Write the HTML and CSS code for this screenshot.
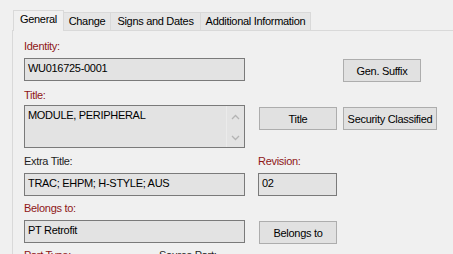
FILE: index.html
```html
<!DOCTYPE html>
<html lang="en">
<head>
  <meta charset="UTF-8" />
  <title>Item Properties</title>
  <link rel="stylesheet" href="styles.css">
</head>
<body>

  <div class="tabs">
    <div class="tab active" style="width:51px">General</div>
    <div class="tab" style="width:47px">Change</div>
    <div class="tab" style="width:90px">Signs and Dates</div>
    <div class="tab" style="width:110px">Additional Information</div>
  </div>

  <div class="panel">
    <div class="form">
      <!-- identity -->
      <div class="lbl req c1 r1">Identity:</div>
      <div class="box c1 r2">WU016725-0001</div>
      <button class="btn c3 r2 btn-top">Gen. Suffix</button>

      <!-- title -->
      <div class="lbl req c1 r3">Title:</div>
      <div class="box multi c1 r4">
        <span class="multi-text">MODULE, PERIPHERAL</span>
        <span class="scroll">
          <svg width="9" height="6" viewBox="0 0 9 6"><path d="M1 5 L4.5 1.5 L8 5" fill="none" stroke="#b4b4b4" stroke-width="1.3"/></svg>
          <svg width="9" height="6" viewBox="0 0 9 6"><path d="M1 1 L4.5 4.5 L8 1" fill="none" stroke="#b4b4b4" stroke-width="1.3"/></svg>
        </span>
      </div>
      <button class="btn c2 r4 btn-title">Title</button>
      <button class="btn c3 r4 btn-title">Security Classified</button>

      <!-- extra title / revision -->
      <div class="lbl c1 r5">Extra Title:</div>
      <div class="lbl req c2 r5">Revision:</div>
      <div class="box c1 r6">TRAC; EHPM; H-STYLE; AUS</div>
      <div class="box c2 r6">02</div>

      <!-- belongs to -->
      <div class="lbl req c1 r7">Belongs to:</div>
      <div class="box c1 r8">PT Retrofit</div>
      <button class="btn c2 r8 btn-top">Belongs to</button>

      <div class="lbl req c1 r9">Part Type:<span class="lbl-2">Source Part:</span></div>
    </div>
  </div>

</body>
</html>
```

FILE: styles.css
```css
body {
  margin: 0;
  background: #f0f0f0;
  font-family: "Liberation Sans", Arial, sans-serif;
  font-size: 11px;
  letter-spacing: -0.3px;
  color: #000;
  width: 453px;
  height: 254px;
  overflow: hidden;
}
.tabs {
  display: flex;
  align-items: flex-end;
  height: 30px;
  padding-left: 13px;
  position: relative;
  z-index: 1;
}
.tab {
  box-sizing: border-box;
  height: 18px;
  background: #e6e6e6;
  border: 1px solid #d9d9d9;
  border-bottom: none;
  border-left: none;
  text-align: center;
  line-height: 17px;
  white-space: nowrap;
}
.tab.active {
  height: 21px;
  margin-bottom: -1px;
  background: #f0f0f0;
  border-left: 1px solid #d9d9d9;
  line-height: 16px;
}
.panel {
  box-sizing: border-box;
  margin-left: 12px;
  border-top: 1px solid #d9d9d9;
  border-left: 1px solid #d9d9d9;
  height: 224px;
  overflow: hidden;
  padding: 9px 0 0 11px;
}
.form {
  display: grid;
  grid-template-columns: 234px 85px 94px;
  grid-template-rows: 18px 31px 16px 50px 18px 29px 18px 29px 18px;
}
.c1 { grid-column: 1; width: 221px; }
.c2 { grid-column: 2; }
.c3 { grid-column: 3; }
.r1 { grid-row: 1; }
.r2 { grid-row: 2; }
.r3 { grid-row: 3; }
.r4 { grid-row: 4; }
.r5 { grid-row: 5; }
.r6 { grid-row: 6; }
.r7 { grid-row: 7; }
.r8 { grid-row: 8; }
.r9 { grid-row: 9; }
.lbl {
  line-height: 13px;
  color: #1e1e1e;
  white-space: nowrap;
}
.req { color: #8e1616; }
.lbl-2 {
  margin-left: 88px;
  color: #1e1e1e;
}
.box {
  box-sizing: border-box;
  height: 23px;
  background: #e3e3e3;
  border: 1px solid #7a7a7a;
  padding: 3px 3px 0;
  line-height: 13px;
  white-space: nowrap;
  align-self: start;
}
.box.c2 { width: 79px; }
.multi {
  height: 43px;
  display: flex;
  padding: 0;
}
.multi-text {
  flex: 1;
  padding: 3px 3px 0;
}
.scroll {
  width: 17px;
  border-left: 1px solid #ebebeb;
  display: flex;
  flex-direction: column;
  justify-content: space-between;
  align-items: center;
  padding: 8px 0 6px;
}
.scroll svg { display: block; }
.btn {
  box-sizing: border-box;
  height: 23px;
  background: #e1e1e1;
  border: 1px solid #adadad;
  font: inherit;
  letter-spacing: inherit;
  color: #000;
  padding: 0;
  align-self: start;
}
.btn.c2 { width: 78px; margin-left: 1px; }
.btn.c3 { width: 94px; }
.btn-top { margin-top: 1px; }
.btn-title { margin-top: 2px; }
.c3.btn-top { width: 78px; }
```
